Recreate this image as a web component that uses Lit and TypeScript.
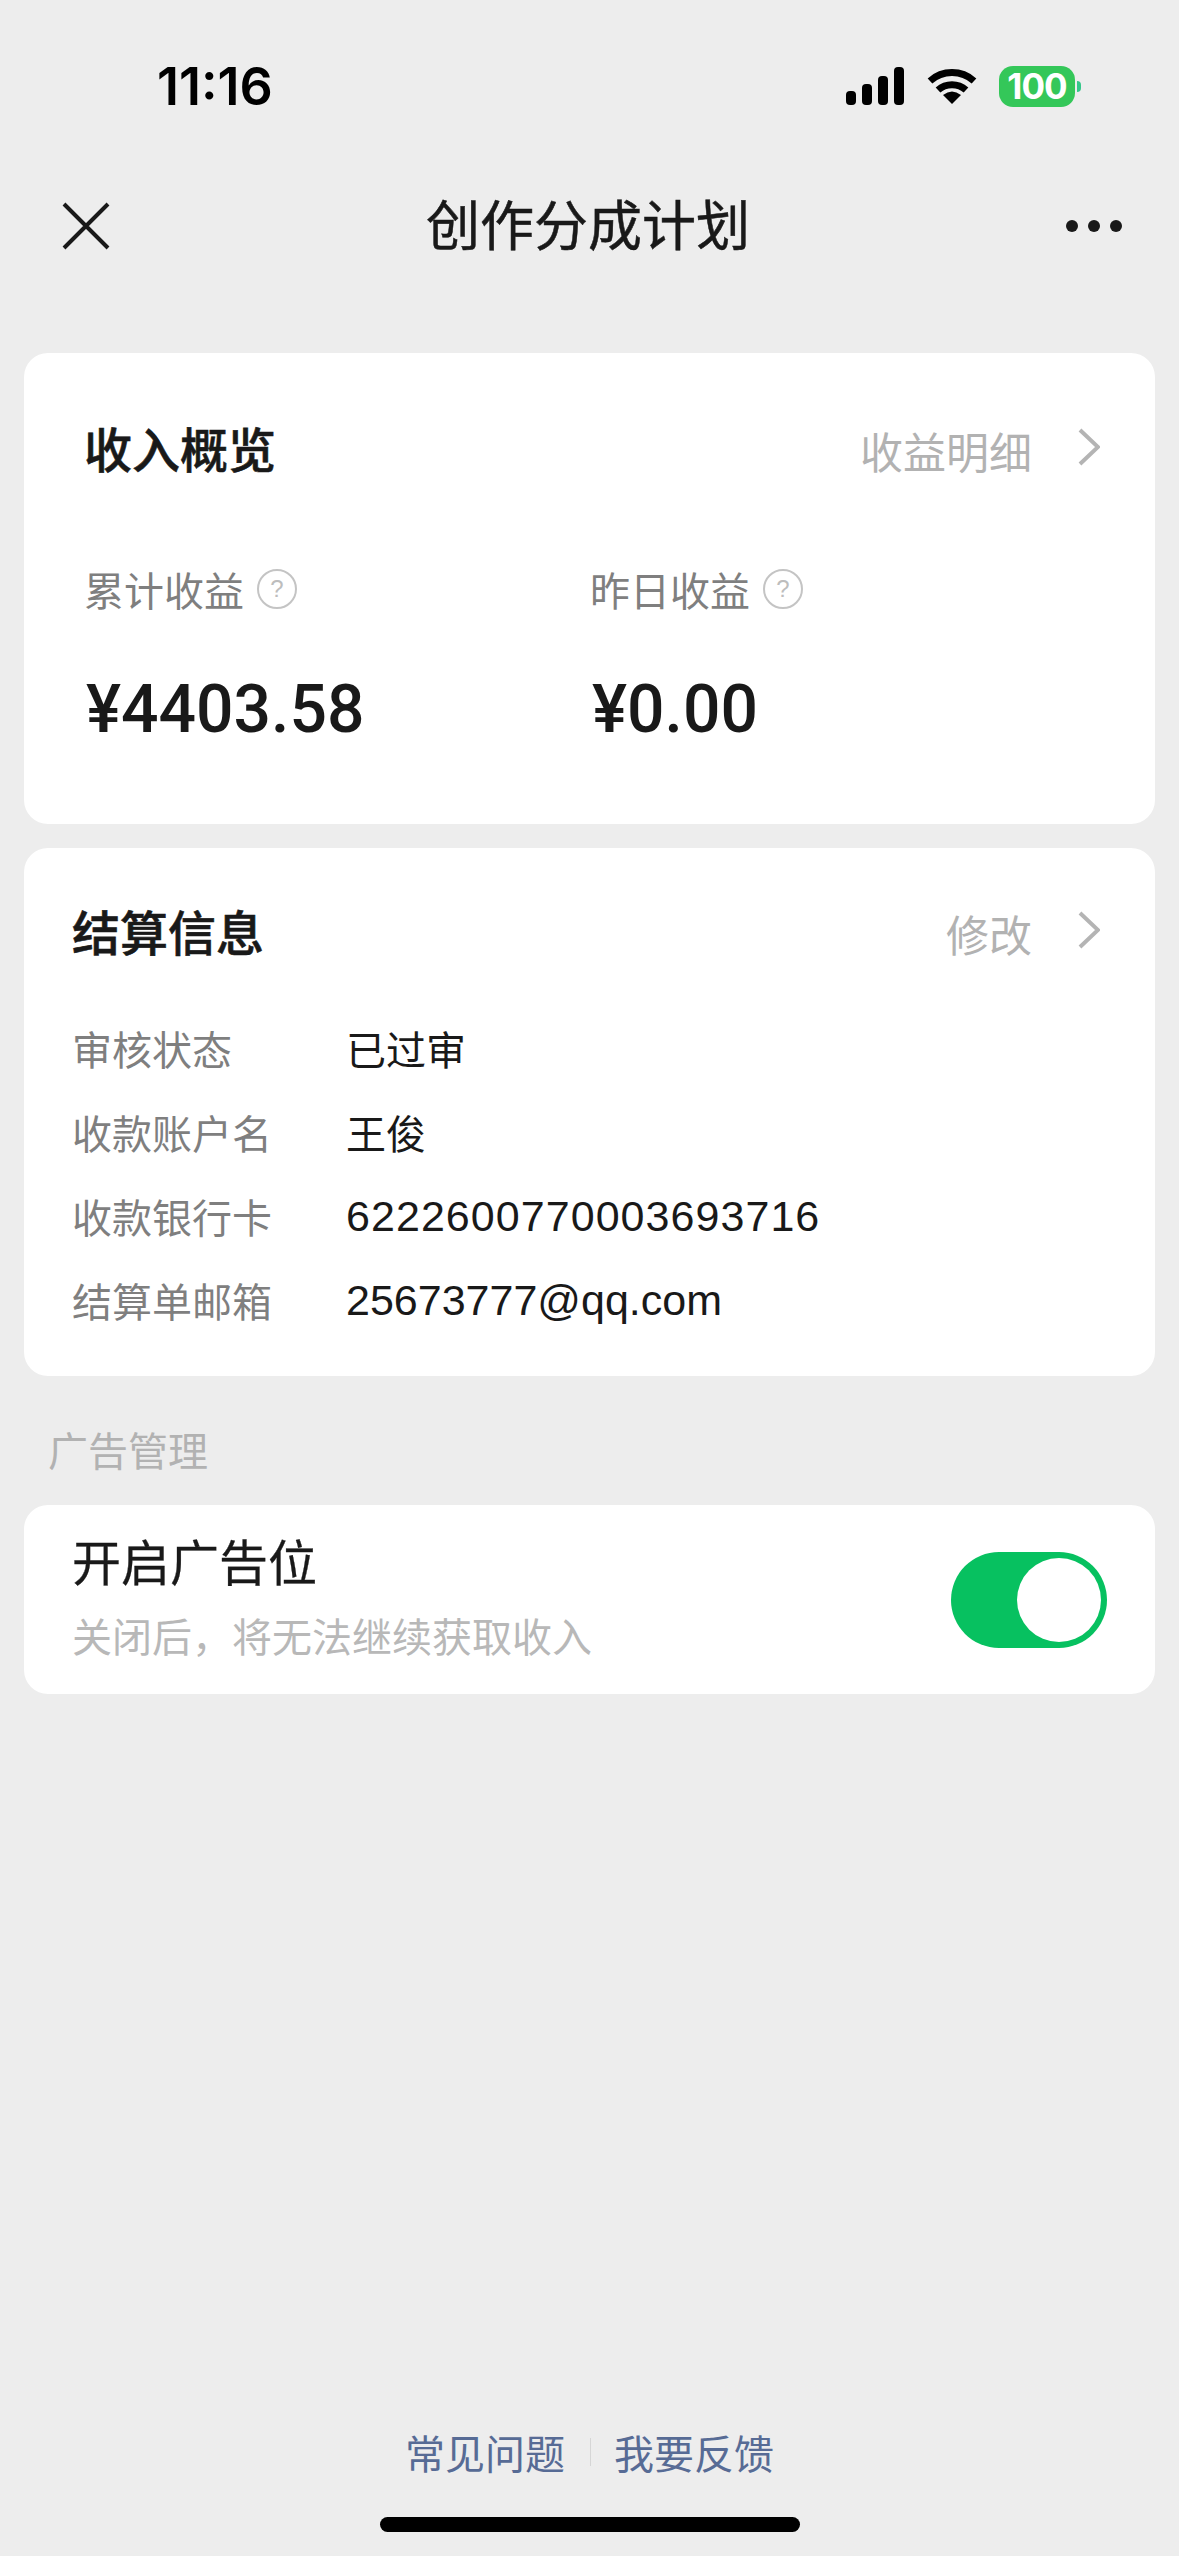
import { LitElement, html, css } from "lit";
import { customElement } from "lit/decorators.js";

const chevron = html`<svg class="chev" viewBox="0 0 22 38" width="22" height="38"><path d="M2 2 L20 19 L2 36" fill="none" stroke="#b4b4b4" stroke-width="4"/></svg>`;

@customElement("app-root")
export class AppRoot extends LitElement {
  static styles = css`
    :host { display: block; width: 1179px; height: 2556px; background: #ededed; overflow: hidden;
      font-family: "Liberation Sans", "Noto Sans CJK SC", sans-serif; color: #191919; }
    .page { height: 2556px; display: flex; flex-direction: column; }
    .status { height: 174px; flex: none; box-sizing: border-box; padding: 58px 98px 0 157px; display: flex; justify-content: space-between; align-items: flex-start; }
    .time { font: 600 52px/58px Inter, sans-serif; color: #000; }
    .sys { display: flex; align-items: flex-start; padding-top: 9px; }
    .signal { margin-right: 23px; }
    .wifi { margin-right: 22px; }
    .batt { width: 76px; height: 41px; margin-top: -1px; border-radius: 14px; background: #34c759; color: #fff; font: 700 35px/41px Inter, sans-serif; text-align: center; letter-spacing: -1px; }
    .nub { width: 4px; height: 11px; margin: 14px 0 0 2px; background: #34c789; border-radius: 0 4px 4px 0; }
    .nav { height: 104px; flex: none; box-sizing: border-box; padding: 0 57px 0 62px; display: flex; justify-content: space-between; align-items: center; }
    .title { font: 400 54px/64px "Noto Sans CJK SC", sans-serif; color: #191919; -webkit-text-stroke: 0.5px #191919; margin-top: -6px; }
    .dots { display: flex; gap: 10px; }
    .dots i { width: 12px; height: 12px; border-radius: 50%; background: #191919; display: block; }
    .card { background: #fff; border-radius: 24px; margin: 0 24px; flex: none; }
    .c1 { margin-top: 75px; height: 471px; box-sizing: border-box; padding: 62px 55px 0 60px; }
    .c2 { margin-top: 24px; height: 528px; box-sizing: border-box; padding: 50px 55px 0 48px; }
    .head { display: flex; align-items: center; justify-content: space-between; height: 64px; }
    .h { font: 500 48px/64px "Noto Sans CJK SC", sans-serif; -webkit-text-stroke: 0.6px #191919; }
    .link { display: flex; align-items: center; font: 400 43px/64px "Noto Sans CJK SC", sans-serif; color: #b2b2b2; position: relative; top: 3px; }
    .chev { margin-left: 46px; display: block; position: relative; top: -3px; }
    .stats { display: grid; grid-template-columns: 506px 1fr; margin-top: 82px; }
    .lab { display: flex; align-items: center; font: 400 40px/56px "Noto Sans CJK SC", sans-serif; color: #7f7f7f; }
    .q { width: 36px; height: 36px; margin-left: 13px; border: 2.5px solid #c4c4c4; border-radius: 50%; color: #bdbdbd; font: 400 24px/36px "Liberation Sans", sans-serif; text-align: center; }
    .val { font: 500 66px/80px Roboto, sans-serif; color: #191919; margin-top: 53px; padding-left: 2px; }
    .rows { display: grid; grid-template-columns: 274px 1fr; grid-auto-rows: 84px; margin-top: 44px; align-items: center; line-height: 56px; }
    .rl { color: #7f7f7f; font: 400 40px/56px "Noto Sans CJK SC", sans-serif; }
    .rv { color: #191919; font-size: 43px; }
    .rv.num { letter-spacing: 1.05px; }
    .rv.cn { font: 400 40px/56px "Noto Sans CJK SC", sans-serif; }
    .sect { margin: 45px 0 0 48px; font: 400 40px/56px "Noto Sans CJK SC", sans-serif; color: #b2b2b2; flex: none; }
    .c3 { margin-top: 28px; height: 189px; box-sizing: border-box; padding: 0 48px 0 48px; display: flex; align-items: center; justify-content: space-between; }
    .big { font: 400 49px/64px "Noto Sans CJK SC", sans-serif; color: #191919; margin-top: -8px; -webkit-text-stroke: 0.3px #191919; }
    .sub { font: 400 40px/56px "Noto Sans CJK SC", sans-serif; color: #b8b8b8; margin-top: 15px; }
    .toggle { width: 156px; height: 96px; border-radius: 48px; background: #07c160; box-sizing: border-box; padding: 6px 6px 6px 66px; }
    .toggle i { display: block; width: 84px; height: 84px; border-radius: 50%; background: #fff; }
    .foot { margin-top: auto; display: flex; justify-content: center; align-items: center; font: 400 40px/56px "Noto Sans CJK SC", sans-serif; color: #576b95; }
    .foot .sep { width: 1px; height: 28px; background: #d6d6d6; margin: 0 23px 0 25px; }
    .homewrap { display: flex; justify-content: center; padding: 37px 0 24px; flex: none; }
    .home { width: 420px; height: 15px; border-radius: 8px; background: #000; }
  `;

  render() {
    return html`<div class="page">
      <div class="status">
        <div class="time">11:16</div>
        <div class="sys">
          <svg class="signal" width="58" height="38" viewBox="0 0 58 38" fill="#000">
            <rect x="0" y="24" width="10" height="14" rx="4"/>
            <rect x="16" y="17" width="10" height="21" rx="4"/>
            <rect x="32" y="9" width="10" height="29" rx="4"/>
            <rect x="48" y="0" width="10" height="38" rx="4"/>
          </svg>
          <svg class="wifi" width="50" height="38" viewBox="0 0 50 38">
            <path d="M3 14 A33 33 0 0 1 47 14" fill="none" stroke="#000" stroke-width="7"/>
            <path d="M11 23 A21 21 0 0 1 39 23" fill="none" stroke="#000" stroke-width="7"/>
            <path d="M25 37 L16 28 Q25 21 34 28 Z" fill="#000"/>
          </svg>
          <div class="batt">100</div>
          <div class="nub"></div>
        </div>
      </div>
      <div class="nav">
        <svg width="48" height="48" viewBox="0 0 48 48"><path d="M2 2 L46 46 M46 2 L2 46" stroke="#191919" stroke-width="4" fill="none"/></svg>
        <div class="title">创作分成计划</div>
        <div class="dots"><i></i><i></i><i></i></div>
      </div>
      <div class="card c1">
        <div class="head"><div class="h">收入概览</div><div class="link">收益明细${chevron}</div></div>
        <div class="stats">
          <div class="lab">累计收益<span class="q">?</span></div>
          <div class="lab">昨日收益<span class="q">?</span></div>
          <div class="val">¥4403.58</div>
          <div class="val">¥0.00</div>
        </div>
      </div>
      <div class="card c2">
        <div class="head"><div class="h">结算信息</div><div class="link">修改${chevron}</div></div>
        <div class="rows">
          <div class="rl">审核状态</div><div class="rv cn">已过审</div>
          <div class="rl">收款账户名</div><div class="rv cn">王俊</div>
          <div class="rl">收款银行卡</div><div class="rv num">6222600770003693716</div>
          <div class="rl">结算单邮箱</div><div class="rv">25673777@qq.com</div>
        </div>
      </div>
      <div class="sect">广告管理</div>
      <div class="card c3">
        <div>
          <div class="big">开启广告位</div>
          <div class="sub">关闭后，将无法继续获取收入</div>
        </div>
        <div class="toggle"><i></i></div>
      </div>
      <div class="foot"><span>常见问题</span><span class="sep"></span><span>我要反馈</span></div>
      <div class="homewrap"><div class="home"></div></div>
    </div>`;
  }
}
